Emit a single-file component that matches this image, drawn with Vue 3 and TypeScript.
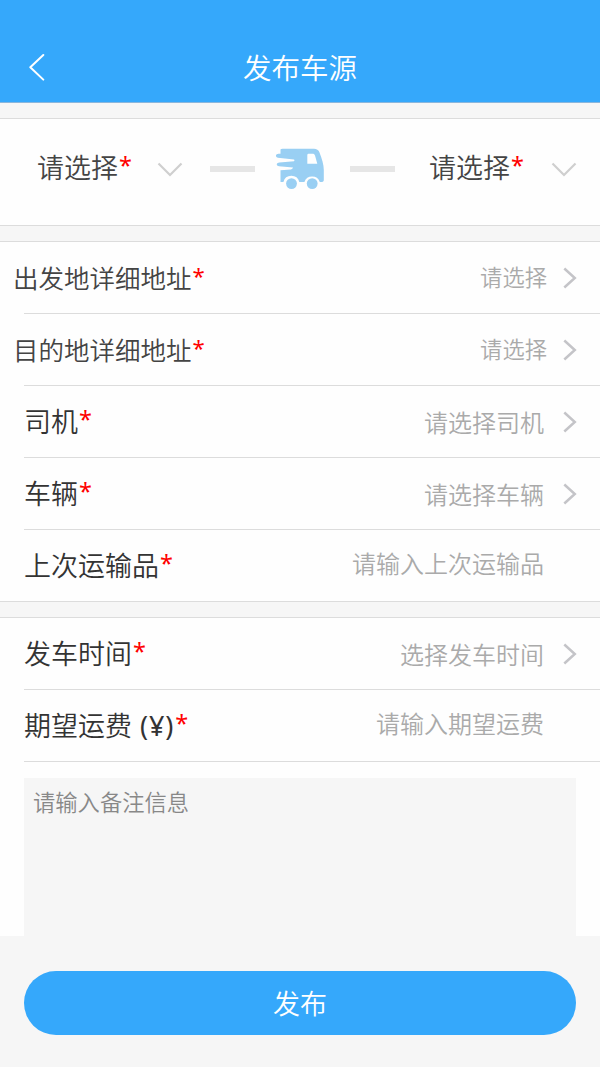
<script setup lang="ts">
interface Field {
  label: string
  unit?: string
  hint: string
  kind: 'place' | 'picker' | 'input'
}

const tripFields: Field[] = [
  { label: '出发地详细地址', hint: '请选择', kind: 'place' },
  { label: '目的地详细地址', hint: '请选择', kind: 'place' },
  { label: '司机', hint: '请选择司机', kind: 'picker' },
  { label: '车辆', hint: '请选择车辆', kind: 'picker' },
  { label: '上次运输品', hint: '请输入上次运输品', kind: 'input' },
]

const costFields: Field[] = [
  { label: '发车时间', hint: '选择发车时间', kind: 'picker' },
  { label: '期望运费', unit: ' (¥)', hint: '请输入期望运费', kind: 'input' },
]

const groups = [
  { name: 'trip', fields: tripFields },
  { name: 'cost', fields: costFields },
]
</script>

<template>
  <div class="page">
    <header class="header">
      <svg class="back" width="18" height="28" viewBox="0 0 18 28">
        <path d="M16.3 2 L3.3 14.2 L16.3 26.6" fill="none" stroke="#fff" stroke-width="2" stroke-linecap="round" stroke-linejoin="round" />
      </svg>
      <h1>发布车源</h1>
    </header>

    <section class="route">
      <div class="end from">
        <span class="city">请选择<i class="star">*</i></span>
        <svg width="26" height="16" viewBox="0 0 26 16">
          <path d="M1.5 1.5 L13 13 L24.5 1.5" fill="none" stroke="#cfcfcf" stroke-width="2.2" />
        </svg>
      </div>
      <span class="dash"></span>
      <svg class="truck" width="50" height="42" viewBox="0 0 50 42">
        <path d="M5.5 1.5 Q6 .8 7.5 .8 H39 Q43 .8 44.5 4.5 C47 11 48.8 17 48.8 22 V32 Q48.8 34 46 34 H44.8 A8.2 8.2 0 0 0 29.4 34 H24.3 A8.2 8.2 0 0 0 8.4 34 H5.5 V22.3 L16 21.4 Q18 20.7 18 19.6 L4 18.3 Q1.4 17.8 1.7 16.2 Q2 14.5 4.5 14.4 L19 13.3 Q20 12.3 19 11.6 L2.8 9.8 Q.8 9.2 .9 7.5 Q1.2 5.7 3.4 5.7 H5.5 Z" fill="#99cff3" />
        <path d="M33.4 5.8 H38.3 Q39.4 5.8 40 7.4 L42.3 15.7 H32.3 V7 Q32.4 5.8 33.4 5.8 Z" fill="#fff" />
        <circle cx="16.5" cy="35.6" r="5.4" fill="#99cff3" />
        <circle cx="37.2" cy="35.6" r="5.4" fill="#99cff3" />
      </svg>
      <span class="dash"></span>
      <div class="end to">
        <span class="city">请选择<i class="star">*</i></span>
        <svg width="26" height="16" viewBox="0 0 26 16">
          <path d="M1.5 1.5 L13 13 L24.5 1.5" fill="none" stroke="#cfcfcf" stroke-width="2.2" />
        </svg>
      </div>
    </section>

    <section v-for="g in groups" :key="g.name" class="group" :class="g.name">
      <div v-for="f in g.fields" :key="f.label" class="row" :class="f.kind">
        <span class="label">{{ f.label }}<span v-if="f.unit" class="unit">{{ f.unit }}</span><i class="star">*</i></span>
        <span class="hint">{{ f.hint }}</span>
        <svg v-if="f.kind !== 'input'" class="arrow" width="14" height="22" viewBox="0 0 14 22">
          <path d="M1.3 1.5 L11.8 11 L1.3 20.5" fill="none" stroke="#c4c4c8" stroke-width="2.5" />
        </svg>
      </div>
      <div v-if="g.name === 'cost'" class="note">请输入备注信息</div>
    </section>

    <footer class="footer">
      <button type="button">发布</button>
    </footer>
  </div>
</template>

<style>
body {
  margin: 0;
}
</style>

<style scoped>
.page {
  width: 600px;
  height: 1067px;
  display: flex;
  flex-direction: column;
  background: #f6f6f6;
  font-family: "Noto Sans CJK SC", sans-serif;
  font-weight: 350;
  overflow: hidden;
}
.page * {
  box-sizing: border-box;
}
svg {
  display: block;
  flex: none;
}
.header {
  flex: none;
  height: 103px;
  padding: 32px 27px 0;
  display: grid;
  grid-template-columns: 18px 1fr 18px;
  align-items: center;
  background: #35a8fb;
  border-bottom: 1px solid #8ab6dc;
}
h1 {
  margin: 0;
  text-align: center;
  font-size: 28.5px;
  line-height: 40px;
  font-weight: inherit;
  color: #fff;
}
.star {
  margin-left: 1px;
  font-family: "Noto Sans", sans-serif;
  font-size: 0.87em;
  font-style: normal;
  font-weight: 400;
  line-height: 0;
  vertical-align: 4px;
  color: #f00;
}
.unit {
  font-family: "Noto Sans", sans-serif;
  font-weight: 400;
  line-height: 0;
  letter-spacing: 0.9px;
}
.route {
  flex: none;
  height: 108px;
  margin-top: 15px;
  padding: 0 22px 6px 37px;
  display: flex;
  align-items: center;
  background: #fefefe;
  border-top: 1px solid #dcdcdc;
  border-bottom: 1px solid #dcdcdc;
}
.end {
  display: flex;
  align-items: center;
  justify-content: space-between;
  font-size: 27px;
  line-height: 40px;
  color: #444;
}
.end svg {
  margin-top: 2px;
}
.from {
  width: 146px;
  margin-right: 27px;
}
.to {
  width: 148px;
  margin-left: 34px;
}
.city {
  margin-top: -4px;
}
.dash {
  width: 45px;
  height: 6px;
  background: #e6e6e6;
}
.truck {
  margin: 0 25px 0 20px;
}
.group {
  flex: none;
  margin-top: 15px;
  background: #fefefe;
  border-top: 1px solid #dcdcdc;
}
.trip {
  border-bottom: 1px solid #dcdcdc;
}
.row {
  height: 72px;
  margin-left: 24px;
  padding-right: 23px;
  display: flex;
  align-items: center;
  border-bottom: 1px solid #dcdcdc;
  line-height: 40px;
}
.trip .row:last-child {
  height: 71px;
  border-bottom: 0;
}
.label {
  flex: 1;
  padding-bottom: 2px;
  font-size: 27px;
  color: #333;
  white-space: pre;
}
.hint {
  font-size: 24px;
  color: #aaa;
  margin-right: 19px;
}
.place .label {
  margin-left: -11px;
  font-size: 25.5px;
  color: #444;
}
.place .hint {
  padding-bottom: 3px;
  font-size: 22.3px;
  margin-right: 16px;
}
.input .hint {
  padding-bottom: 5px;
  margin-right: 33px;
}
.note {
  height: 158px;
  margin: 16px 24px 0;
  padding: 3px 9px;
  background: #f6f6f6;
  font-size: 22.3px;
  line-height: 40px;
  color: #888;
}
.footer {
  flex: none;
  padding: 35px 24px 0;
}
button {
  display: block;
  width: 100%;
  height: 64px;
  padding: 0;
  border: 0;
  border-radius: 32px;
  background: #35a8fb;
  font: inherit;
  font-size: 27px;
  line-height: 64px;
  color: #fff;
}
</style>
